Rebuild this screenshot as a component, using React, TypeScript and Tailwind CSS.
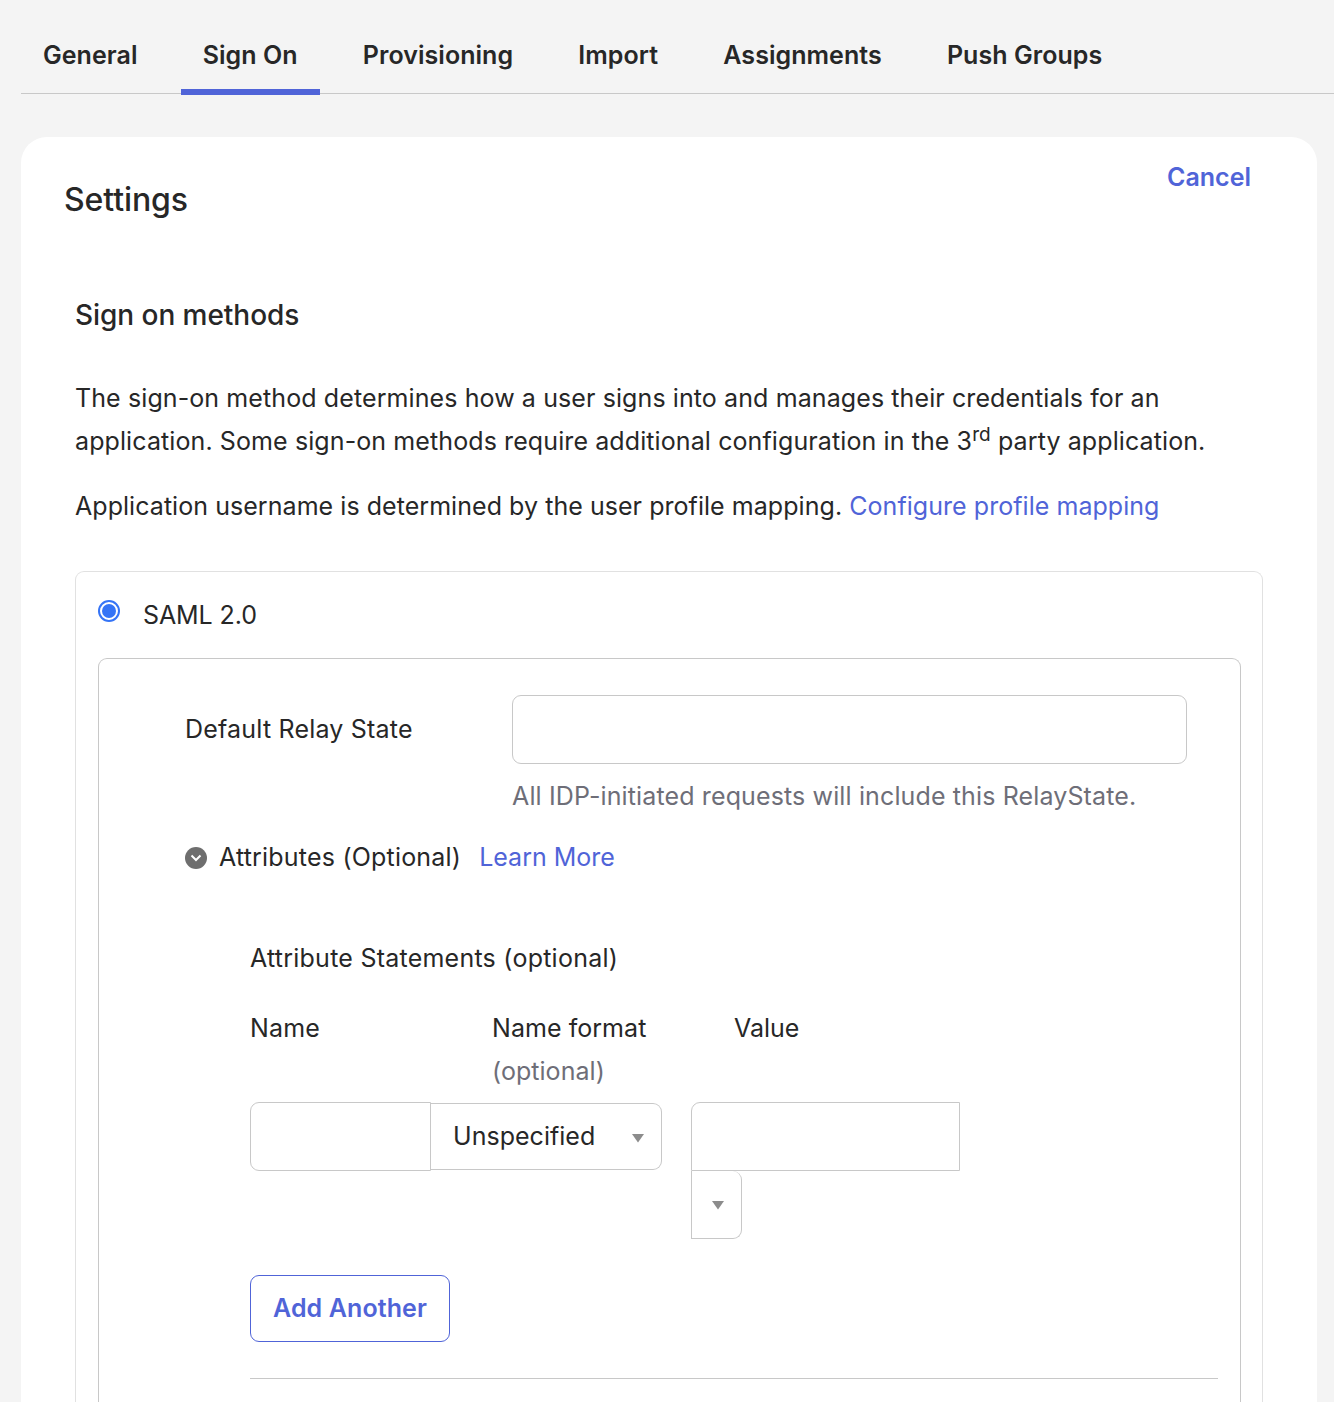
import { ReactNode } from "react";

const tabs = ["General", "Sign On", "Provisioning", "Import", "Assignments", "Push Groups"];

const Caret = () => (
	<svg width="14" height="10" viewBox="0 0 14 10" className="block">
		<path d="M1 1h12L7 9.5z" fill="#8c8c8c" />
	</svg>
);

const TextLink = ({ children }: { children: ReactNode }) => (
	<a href="#" className="text-[#5064d8]">
		{children}
	</a>
);

export default function App() {
	return (
		<div className="h-[1402px] overflow-hidden bg-[#f4f4f4] pl-[21px] pr-[17px] font-['Inter',sans-serif] text-[25px] tracking-[0.2px] text-[#272727]">
			<nav className="-mr-[17px] flex h-[94px] gap-[21.2px] border-b border-[#c8c8c8] pt-[17px]">
				{tabs.map((tab) => (
					<a
						key={tab}
						href="#"
						className={`h-[78px] px-[22px] pt-[17px] text-[25px] leading-[42px] font-semibold tracking-[0.05px] ${
							tab === "Sign On" ? "border-b-[6px] border-[#5064d8]" : ""
						}`}
					>
						{tab}
					</a>
				))}
			</nav>

			<main className="mt-[43px] rounded-t-[26px] bg-white pt-[20px] pr-[54px] pl-[44px]">
				<div className="flex items-start justify-between">
					<h1 className="mt-[23px] -ml-px text-[32px] leading-[40px] font-medium tracking-[-0.1px]">Settings</h1>
					<a href="#" className="mr-[12px] text-[25px] leading-[40px] font-semibold tracking-normal text-[#5064d8]">
						Cancel
					</a>
				</div>

				<div className="pl-[10px]">
					<h2 className="mt-[75px] text-[28px] leading-[40px] font-medium tracking-[-0.05px]">Sign on methods</h2>
					<p className="mt-[42px] leading-[43px] tracking-[0.1px]">
						The sign-on method determines how a user signs into and manages their credentials for an application. Some
						sign-on methods require additional configuration in the 3
						<sup className="text-[19px] leading-none">rd</sup> party application.
					</p>
					<p className="mt-[22px] leading-[43px] tracking-[0.05px]">
						Application username is determined by the user profile mapping. <TextLink>Configure profile mapping</TextLink>
					</p>

					<section className="mt-[43px] rounded-t-[9px] border border-b-0 border-[#e1e1e1] pt-[22px] pr-[21px] pl-[22px]">
						<div className="flex h-[42px] items-center gap-[23px]">
							<span className="mb-[9px] flex h-[22px] w-[22px] items-center justify-center rounded-full border-2 border-[#3574f6]">
								<span className="h-[14px] w-[14px] rounded-full bg-[#3574f6]" />
							</span>
							<span className="pt-[2px] tracking-[-0.1px]">SAML 2.0</span>
						</div>

						<div className="mt-[22px] h-[760px] rounded-t-[9px] border border-b-0 border-[#c8c8c8] pt-[36px] pr-[22px] pl-[86px]">
							<div className="flex">
								<label className="w-[327px] leading-[68px]">Default Relay State</label>
								<div>
									<div className="h-[69px] w-[675px] rounded-[9px] border border-[#c8c8c8]" />
									<p className="mt-[11px] leading-[43px] tracking-[0.13px] text-[#6e6e78]">
										All IDP-initiated requests will include this RelayState.
									</p>
								</div>
							</div>

							<div className="mt-[18px] flex h-[43px] items-center">
								<span className="mr-[12px] flex h-[22px] w-[22px] items-center justify-center rounded-full bg-[#6e6e6e]">
									<svg width="12" height="8" viewBox="0 0 12 8" fill="none">
										<path d="M1.5 1.5 6 6l4.5-4.5" stroke="white" strokeWidth="2" />
									</svg>
								</span>
								<span>Attributes (Optional)</span>
								<span className="ml-[18px] tracking-[0px]">
									<TextLink>Learn More</TextLink>
								</span>
							</div>

							<div className="pl-[65px]">
								<h3 className="mt-[58px] leading-[43px] tracking-[0.24px]">Attribute Statements (optional)</h3>
								<div className="mt-[27px] flex">
									<span className="w-[242px] leading-[43px]">Name</span>
									<div className="w-[242px] leading-[43px] tracking-[0.05px]">
										<div>Name format</div>
										<div className="text-[#6e6e78]">(optional)</div>
									</div>
									<span className="leading-[43px] tracking-[0px]">Value</span>
								</div>

								<div className="mt-[9px] flex items-start">
									<div className="h-[69px] w-[181px] rounded-l-[9px] border border-[#c8c8c8]" />
									<div className="mt-px flex h-[67px] w-[231px] items-center justify-between rounded-r-[9px] border border-l-0 border-[#c8c8c8] pr-[16px] pl-[22px]">
										<span className="tracking-[0.03px]">Unspecified</span>
										<span className="pt-[2px]">
											<Caret />
										</span>
									</div>
									<div className="ml-[29px]">
										<div className="h-[69px] w-[269px] rounded-tl-[9px] border border-[#c8c8c8]" />
										<div className="flex h-[68px] w-[51px] items-center justify-center rounded-r-[9px] border border-t-0 border-[#c8c8c8] pl-[2px]">
											<Caret />
										</div>
									</div>
								</div>

								<button className="mt-[36px] h-[67px] w-[200px] rounded-[9px] border border-[#5064d8] bg-white text-[25px] font-semibold tracking-[0.1px] text-[#5064d8]">
									Add Another
								</button>
								<hr className="mt-[36px] border-[#c8c8c8]" />
							</div>
						</div>
					</section>
				</div>
			</main>
		</div>
	);
}
